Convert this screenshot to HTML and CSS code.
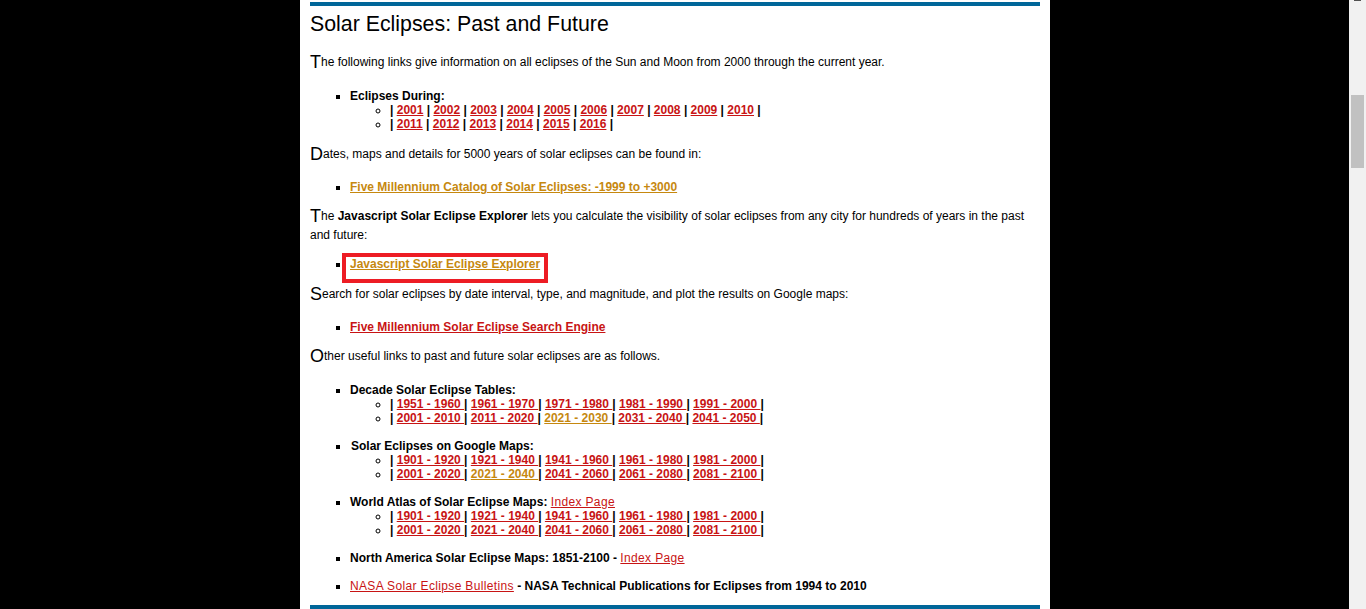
FILE: index.html
```html
<!DOCTYPE html>
<html lang="en">
<head>
<meta charset="utf-8">
<title>Solar Eclipses: Past and Future</title>
<link rel="stylesheet" href="styles.css">
</head>
<body>
<div class="main">
  <div class="page">
    <div class="rule"></div>
    <h1>Solar Eclipses: Past and Future</h1>

    <p><span class="cap">T</span>he following links give information on all eclipses of the Sun and Moon from 2000 through the current year.</p>
    <ul class="first">
      <li>Eclipses During:
        <ul>
          <li>| <a href="#">2001</a> | <a href="#">2002</a> | <a href="#">2003</a> | <a href="#">2004</a> | <a href="#">2005</a> | <a href="#">2006</a> | <a href="#">2007</a> | <a href="#">2008</a> | <a href="#">2009</a> | <a href="#">2010</a> |</li>
          <li>| <a href="#">2011</a> | <a href="#">2012</a> | <a href="#">2013</a> | <a href="#">2014</a> | <a href="#">2015</a> | <a href="#">2016</a> |</li>
        </ul>
      </li>
    </ul>

    <p><span class="cap">D</span>ates, maps and details for 5000 years of solar eclipses can be found in:</p>
    <ul class="short">
      <li><a href="#" class="gold">Five Millennium Catalog of Solar Eclipses: -1999 to +3000</a></li>
    </ul>

    <p><span class="cap">T</span>he <b>Javascript Solar Eclipse Explorer</b> lets you calculate the visibility of solar eclipses from any city for hundreds of years in the past and future:</p>
    <ul class="near">
      <li><a href="#" class="gold annot">Javascript Solar Eclipse Explorer</a></li>
    </ul>

    <p><span class="cap">S</span>earch for solar eclipses by date interval, type, and magnitude, and plot the results on Google maps:</p>
    <ul class="short">
      <li><a href="#">Five Millennium Solar Eclipse Search Engine</a></li>
    </ul>

    <p><span class="cap">O</span>ther useful links to past and future solar eclipses are as follows.</p>
    <ul class="last">
      <li>Decade Solar Eclipse Tables:
        <ul>
          <li>| <a href="#">1951 - 1960 </a>| <a href="#">1961 - 1970 </a>| <a href="#">1971 - 1980 </a>| <a href="#">1981 - 1990 </a>| <a href="#">1991 - 2000 </a>|</li>
          <li>| <a href="#">2001 - 2010 </a>| <a href="#">2011 - 2020 </a>| <a href="#" class="gold">2021 - 2030 </a>| <a href="#">2031 - 2040 </a>| <a href="#">2041 - 2050 </a>|</li>
        </ul>
      </li>
      <li><span class="nudge">Solar Eclipses on Google Maps:</span>
        <ul>
          <li>| <a href="#">1901 - 1920 </a>| <a href="#">1921 - 1940 </a>| <a href="#">1941 - 1960 </a>| <a href="#">1961 - 1980 </a>| <a href="#">1981 - 2000 </a>|</li>
          <li>| <a href="#">2001 - 2020 </a>| <a href="#" class="gold">2021 - 2040 </a>| <a href="#">2041 - 2060 </a>| <a href="#">2061 - 2080 </a>| <a href="#">2081 - 2100 </a>|</li>
        </ul>
      </li>
      <li>World Atlas of Solar Eclipse Maps: <a href="#" class="plain">Index Page</a>
        <ul>
          <li>| <a href="#">1901 - 1920 </a>| <a href="#">1921 - 1940 </a>| <a href="#">1941 - 1960 </a>| <a href="#">1961 - 1980 </a>| <a href="#">1981 - 2000 </a>|</li>
          <li>| <a href="#">2001 - 2020 </a>| <a href="#">2021 - 2040 </a>| <a href="#">2041 - 2060 </a>| <a href="#">2061 - 2080 </a>| <a href="#">2081 - 2100 </a>|</li>
        </ul>
      </li>
      <li>North America Solar Eclipse Maps: 1851-2100 - <a href="#" class="plain">Index Page</a></li>
      <li><a href="#" class="plain">NASA Solar Eclipse Bulletins</a> - NASA Technical Publications for Eclipses from 1994 to 2010</li>
    </ul>
    <div class="rule"></div>
  </div>
</div>
<div class="scrollbar">
  <div class="scroll-arrow"></div>
  <div class="thumb"></div>
</div>
</body>
</html>
```
FILE: styles.css
```css
html, body {
  margin: 0;
  height: 609px;
  overflow: hidden;
}
body {
  background: #000;
  display: flex;
}
.main {
  flex: 1;
  display: flex;
  padding-left: 300px;
}
.page {
  box-sizing: border-box;
  width: 750px;
  padding: 2px 10px 0;
  background: #fff;
  color: #000;
  font-family: "Liberation Sans", Arial, sans-serif;
  font-size: 12px;
}
.rule {
  height: 4px;
  background: #006699;
}
h1 {
  font-size: 21.33px;
  font-weight: normal;
  line-height: 24px;
  margin: 6px 0 17px;
}
p {
  margin: 0;
  line-height: 19px;
}
.cap {
  font-size: 18px;
  line-height: 1;
  vertical-align: -2px;
}
ul {
  margin: 17px 0 13px;
  padding-left: 40px;
  list-style: square;
  line-height: 14px;
  font-weight: bold;
}
ul.first {
  margin-bottom: 14px;
}
ul.short {
  margin-top: 16px;
}
ul.near {
  margin-top: 12px;
  margin-bottom: 14px;
}
ul.last {
  margin-bottom: 12px;
}
li + li {
  margin-top: 14px;
}
ul ul {
  margin: 0;
  list-style: circle;
}
ul ul li + li {
  margin-top: 0;
}
.nudge {
  padding-left: 1px;
}
a {
  color: #c81414;
  text-decoration: underline;
}
a.gold {
  color: #c6880f;
}
a.plain {
  font-weight: normal;
  letter-spacing: 0.35px;
}
.annot {
  position: relative;
}
.annot::after {
  content: "";
  position: absolute;
  left: -8px;
  right: -8px;
  top: -4px;
  bottom: -12px;
  border: 4px solid #ed1c24;
}
.scrollbar {
  width: 17px;
  background: #f1f1f1;
  display: flex;
  flex-direction: column;
  align-items: center;
}
.scroll-arrow {
  width: 7px;
  height: 1px;
  background: #505050;
}
.thumb {
  width: 13px;
  height: 73px;
  margin-top: 94px;
  background: #c1c1c1;
}
```
